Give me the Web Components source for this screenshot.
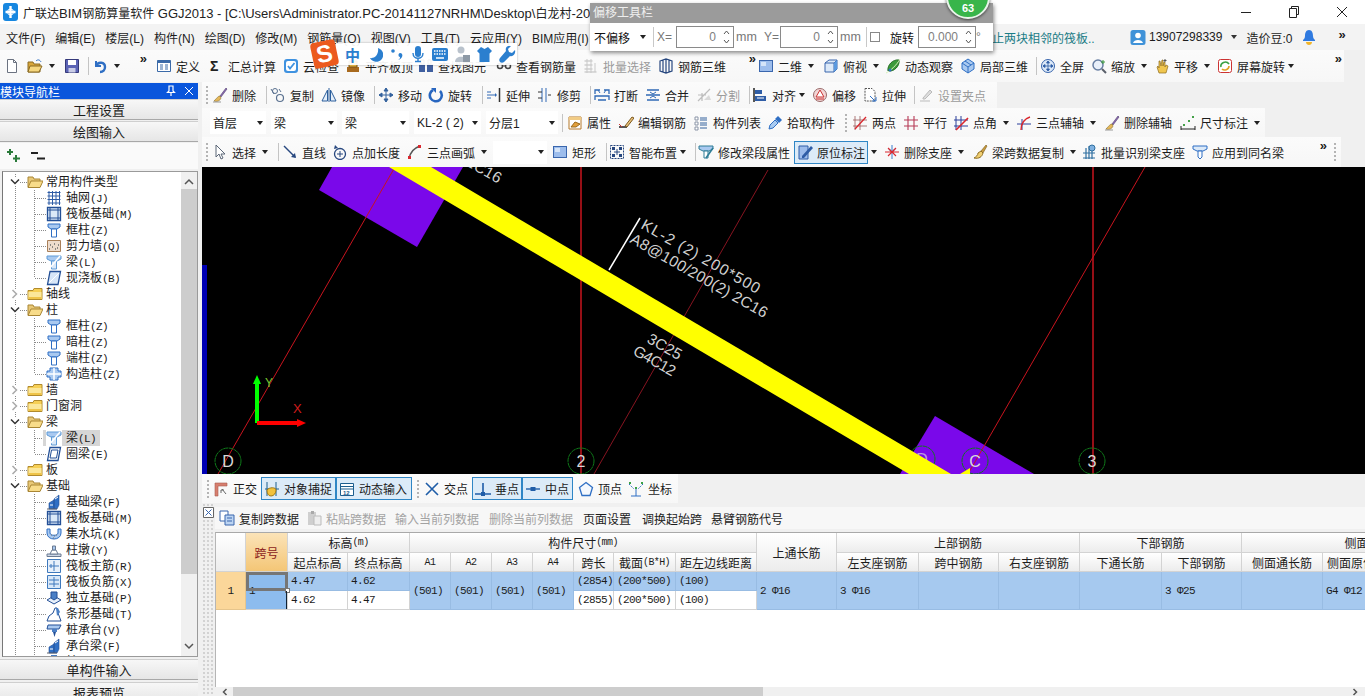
<!DOCTYPE html>
<html lang="zh-CN">
<head>
<meta charset="utf-8">
<title>GGJ2013</title>
<style>
  html, body { margin: 0; height: 100%; overflow: hidden; background: #f0f0f0; }
  body { position: relative; width: 1365px; height: 696px; font: 12px "Liberation Sans", "Noto Sans CJK SC", sans-serif; color: #1c1c1c; }
  #main { display: grid; grid-template-columns: 202px 1163px; height: 614px; }
  #right { display: grid; grid-template-rows: 26px 29px 30px 307px 29px 193px; min-width: 0; }
  .strip { display: flex; min-width: 0; overflow: hidden; }
</style>
</head>
<body>
<app-title><small>广联达</small>BIM<small>钢筋算量软件</small> GGJ2013 - [C:\Users\Administrator.PC-20141127NRHM\Desktop\<small>白龙村</small>-20</app-title>
<app-menu></app-menu>

<div class="strip" style="height:32px">
  <gl-bar style="padding-left:4px">
    <gl-tool w="23" icon="new"></gl-tool>
    <gl-tool w="37" icon="open" arrow></gl-tool>
    <gl-tool w="20" icon="save"></gl-tool>
    <gl-sep w="8"></gl-sep>
    <gl-tool w="30" icon="undo" arrow></gl-tool>
    <gl-more w="34" pr="9"></gl-more>
    <gl-tool w="52" icon="define">定义</gl-tool>
    <gl-tool w="75" icon="sum">汇总计算</gl-tool>
    <gl-tool w="62" icon="cloudcheck">云检查</gl-tool>
    <gl-tool w="73" icon="level">平齐板顶</gl-tool>
    <gl-tool w="78" icon="find">查找图元</gl-tool>
    <gl-tool w="87" icon="glasses">查看钢筋量</gl-tool>
    <gl-tool w="75" icon="batch" disabled>批量选择</gl-tool>
    <gl-tool w="82" icon="rebar3d">钢筋三维</gl-tool>
    <gl-more w="18"></gl-more>
  </gl-bar>
  <gl-bar>
    <gl-tool w="65" icon="rect" arrow>二维</gl-tool>
    <gl-tool w="62" icon="cube" arrow>俯视</gl-tool>
    <gl-tool w="75" icon="orbit">动态观察</gl-tool>
    <gl-tool w="72" icon="local3d">局部三维</gl-tool>
    <gl-sep w="8"></gl-sep>
    <gl-tool w="51" icon="fullscreen">全屏</gl-tool>
    <gl-tool w="63" icon="zoom" arrow>缩放</gl-tool>
    <gl-tool w="63" icon="hand" arrow>平移</gl-tool>
    <gl-tool w="113" icon="rotscreen" arrow small>屏幕旋转</gl-tool>
    <gl-more w="14"></gl-more>
  </gl-bar>
</div>

<div id="main">
  <nav-panel></nav-panel>
  <div id="right">
    <div class="strip">
      <gl-bar>
        <gl-grip w="10"></gl-grip>
        <gl-tool w="50" icon="brush">删除</gl-tool>
        <gl-sep w="8"></gl-sep>
        <gl-tool w="51" icon="copy">复制</gl-tool>
        <gl-tool w="49" icon="mirror">镜像</gl-tool>
        <gl-sep w="8"></gl-sep>
        <gl-tool w="50" icon="move">移动</gl-tool>
        <gl-tool w="50" icon="rotate">旋转</gl-tool>
        <gl-sep w="8"></gl-sep>
        <gl-tool w="51" icon="extend">延伸</gl-tool>
        <gl-tool w="49" icon="trim">修剪</gl-tool>
        <gl-sep w="8"></gl-sep>
        <gl-tool w="51" icon="break">打断</gl-tool>
        <gl-tool w="51" icon="merge">合并</gl-tool>
        <gl-tool w="51" icon="split" disabled>分割</gl-tool>
        <gl-sep w="5"></gl-sep>
        <gl-tool w="60" icon="align" arrow small>对齐</gl-tool>
        <gl-tool w="50" icon="offset">偏移</gl-tool>
        <gl-tool w="49" icon="stretch">拉伸</gl-tool>
        <gl-sep w="7"></gl-sep>
        <gl-tool w="79" icon="grippt" disabled>设置夹点</gl-tool>
      </gl-bar>
    </div>
    <div class="strip">
      <gl-bar style="padding-left:8px">
        <gl-combo w="56">首层</gl-combo>
        <gl-combo w="66" gap="5">梁</gl-combo>
        <gl-combo w="67" gap="5">梁</gl-combo>
        <gl-combo w="67" gap="5">KL-2 ( 2)</gl-combo>
        <gl-combo w="72" gap="5">分层1</gl-combo>
        <gl-sep w="9"></gl-sep>
        <gl-tool w="51" icon="props">属性</gl-tool>
        <gl-tool w="75" icon="editbar">编辑钢筋</gl-tool>
        <gl-tool w="74" icon="list">构件列表</gl-tool>
        <gl-tool w="73" icon="pick">拾取构件</gl-tool>
        <gl-grip w="12"></gl-grip>
        <gl-tool w="51" icon="twopt">两点</gl-tool>
        <gl-tool w="50" icon="parallel">平行</gl-tool>
        <gl-tool w="63" icon="ptangle" arrow>点角</gl-tool>
        <gl-tool w="88" icon="arc3axis" arrow>三点辅轴</gl-tool>
        <gl-tool w="76" icon="brush">删除辅轴</gl-tool>
        <gl-tool w="85" icon="dim" arrow>尺寸标注</gl-tool>
      </gl-bar>
    </div>
    <div class="strip">
      <gl-bar>
        <gl-grip w="10"></gl-grip>
        <gl-tool w="63" icon="cursor" arrow>选择</gl-tool>
        <gl-sep w="7"></gl-sep>
        <gl-tool w="50" icon="line">直线</gl-tool>
        <gl-tool w="75" icon="addlen">点加长度</gl-tool>
        <gl-tool w="86" icon="arc" arrow>三点画弧</gl-tool>
        <gl-combo w="54"></gl-combo>
        <gl-tool w="51" icon="rect" style="margin-left:5px">矩形</gl-tool>
        <gl-sep w="6"></gl-sep>
        <gl-tool w="83" icon="smart" arrow small>智能布置</gl-tool>
        <gl-sep w="6"></gl-sep>
        <gl-tool w="96" icon="beamprop">修改梁段属性</gl-tool>
        <gl-tool w="74" icon="inplace" active>原位标注</gl-tool>
        <gl-tool w="16" arrow small></gl-tool>
        <gl-tool w="88" icon="delsup" arrow>删除支座</gl-tool>
        <gl-tool w="109" icon="broom" arrow>梁跨数据复制</gl-tool>
        <gl-tool w="111" icon="batchsup">批量识别梁支座</gl-tool>
        <gl-tool w="125" icon="applysame">应用到同名梁</gl-tool>
        <gl-more w="12"></gl-more>
        <gl-grip w="12"></gl-grip>
      </gl-bar>
    </div>
    <cad-view></cad-view>
    <div class="strip">
      <gl-bar>
        <gl-grip w="11"></gl-grip>
        <gl-tool w="48" icon="ortho">正交</gl-tool>
        <gl-tool w="75" icon="snap" active>对象捕捉</gl-tool>
        <gl-tool w="76" icon="dyninput" active>动态输入</gl-tool>
        <gl-grip w="12"></gl-grip>
        <gl-tool w="48" icon="cross">交点</gl-tool>
        <gl-tool w="50" icon="perp" active>垂点</gl-tool>
        <gl-tool w="51" icon="mid" active>中点</gl-tool>
        <gl-tool w="55" icon="vertex" style="padding-left:5px">顶点</gl-tool>
        <gl-tool w="50" icon="coord">坐标</gl-tool>
      </gl-bar>
    </div>
    <span-panel></span-panel>
  </div>
</div>

<ime-bar></ime-bar>
<offset-float></offset-float>

<script>
const B = '#2f6fc4', L = '#a9c9f0', R = '#d9272e', Y = '#f0c24a', G = '#5a5f6a';
const column = `<path d="M2 2h12v3l-3 2H5L2 5z" fill="${L}" stroke="${B}"/><path d="M5.500 7h5v8h-5z" fill="#fff" stroke="${B}"/>`;
const footing = `<path d="M3 15V9l5-3v9zM8 15V5l5-4v10l-2 4z" fill="${B}" stroke="#234f96" stroke-width=".6"/><path d="M1 15h10" stroke="${G}"/><path d="M4 11h3M9 5l3-2" stroke="#fff"/>`;
const ICONS = {
  new: `<path d="M3.500 1.500h6l3 3v10h-9z" fill="#fff" stroke="#6b7280"/><path d="M9.500 1.500v3h3" fill="none" stroke="#6b7280"/>`,
  open: `<path d="M1 4h5l1 2h6v8H1z" fill="#d8a63a" stroke="#8a6a22"/><path d="M3 8h12l-3 6H1z" fill="#f5d67e" stroke="#8a6a22"/><path d="M9 3c2-2 4-1 5 1" fill="none" stroke="${B}"/>`,
  save: `<path d="M1.500 1.500h13v13h-13z" fill="#5b63b5" stroke="#35397a"/><path d="M4 2h8v5H4z" fill="#fff"/><path d="M4.500 10h7v4.500h-7z" fill="#c9cce6"/>`,
  undo: `<path d="M4 3v5h5" fill="none" stroke="${B}" stroke-width="2"/><path d="M4 8c2-5 9-4 9 1 0 3-2 5-5 5" fill="none" stroke="${B}" stroke-width="2.400"/>`,
  define: `<path d="M1.500 2.500h13v11h-13z" fill="#fff" stroke="#3b6aa8"/><path d="M1.500 2.500h13v2.500h-13z" fill="#3b6aa8"/><path d="M4 7h3M4 9h3M4 11h3M9 7h3M9 9h3M9 11h3" stroke="#3b6aa8"/>`,
  sum: `<text x="2" y="13" font-size="14" font-weight="700" font-family="Liberation Sans" fill="#222">Σ</text>`,
  cloudcheck: `<rect x="1" y="1" width="14" height="14" rx="3" fill="#3f92e0"/><rect x="3" y="3" width="10" height="10" rx="2" fill="#fff"/><path d="M5 8l2 2.500L11.500 5" fill="none" stroke="#3f92e0" stroke-width="1.800"/>`,
  level: `<path d="M2 9h12v5H2z" fill="#a86a1e"/><path d="M4 3h8v6H4z" fill="#f1c04a" stroke="#7a5314"/>`,
  find: `<path d="M1 6h6v8H1zM9 6h6v8H9z" fill="#3f5fa0"/><path d="M3 2h3v4H3zM10 2h3v4h-3z" fill="#e8e8e8" stroke="#444"/>`,
  glasses: `<circle cx="4" cy="8" r="2.500" fill="none" stroke="#444" stroke-width="1.500"/><circle cx="12" cy="8" r="2.500" fill="none" stroke="#444" stroke-width="1.500"/><path d="M6.500 8h3" stroke="#444"/>`,
  batch: `<path d="M1.500 3h8M1.500 7h8M1.500 11h8M1.500 14h12" stroke="#bbb"/><path d="M4 1v14M8 1v14M12 5v9" stroke="#c9c9c9"/>`,
  rebar3d: `<path d="M2 3l6-2 6 2v10l-6 2-6-2zM8 1v14M5 2v12M11 2v12" fill="none" stroke="#27477f" stroke-width="1.200"/>`,
  rect: `<rect x="1.500" y="2.500" width="13" height="11" fill="#9dbdec" stroke="#3a66ad"/><rect x="3" y="4" width="5" height="4" fill="#d5e4f8"/>`,
  cube: `<path d="M2 5l4-3h8v9l-3 3H2z" fill="#dce9f8" stroke="#3a66ad"/><path d="M2 5h9v9M11 5l3-3" fill="none" stroke="#3a66ad"/><path d="M11 5l3-3v9l-3 3z" fill="#5b9adf"/>`,
  orbit: `<path d="M3 13C2 7 8 1 14 2c1 6-5 12-11 11z" fill="#3c9a3a" stroke="#1e6b1e"/><path d="M1 15c3-1 11-8 14-14" stroke="#d7efb8" fill="none"/><circle cx="5" cy="12" r="1.500" fill="#2f6fc4"/>`,
  local3d: `<path d="M8 1l6 4v6l-6 4-6-4V5z" fill="${L}" stroke="${B}"/><path d="M2 5l6 4 6-4M8 9v6M5 3l6 4" fill="none" stroke="${B}"/>`,
  fullscreen: `<circle cx="8" cy="8" r="6.500" fill="#dce9f8" stroke="#3a66ad"/><path d="M8 3v10M3 8h10M8 3L6.500 5h3zM8 13l-1.500-2h3zM3 8l2-1.500v3zM13 8l-2-1.500v3z" stroke="#2f5da6" fill="#2f5da6" stroke-width=".8"/>`,
  zoom: `<circle cx="7" cy="7" r="5" fill="#e9f0fa" stroke="#687fa3" stroke-width="1.500"/><path d="M11 11l4 4" stroke="#5a5f6a" stroke-width="2"/><path d="M12 2v4M10 4h4" stroke="#3d9a3d"/>`,
  hand: `<path d="M3 9l2 6h7l2-7-2-1-1 2V4l-1 0-1 4V2H8L7 8 6 3H5v7L4 8z" fill="#f0c64f" stroke="#8e6c1c" stroke-width=".7"/><path d="M11 1v3M9.500 2.500h3" stroke="#555"/>`,
  rotscreen: `<rect x="1.500" y="1.500" width="13" height="13" rx="2" fill="#fff" stroke="#c33"/><path d="M4 9c-1-4 5-7 8-3" fill="none" stroke="#39a144" stroke-width="1.600"/><path d="M12 8c0 4-5 5-7 3" fill="none" stroke="#e0a022" stroke-width="1.600"/>`,
  brush: `<path d="M8 9l6-8 1 1-6 8z" fill="#8d6cb4" stroke="#4e3b6c" stroke-width=".6"/><path d="M8 9c-2 0-3 2-6 5 3 1 6 0 7-3z" fill="#e5b75a" stroke="#88702e" stroke-width=".6"/><path d="M1 15h8" stroke="#999"/>`,
  copy: `<circle cx="5" cy="4" r="2.500" fill="none" stroke="#59708f"/><circle cx="10" cy="11" r="3.500" fill="none" stroke="#59708f" stroke-width="1.200"/><path d="M1 2l3 5M9 2l2 3" stroke="#59708f"/>`,
  mirror: `<path d="M8 1v14" stroke="#2c5f9c"/><path d="M6.500 3v11H1zM9.500 3v11H15z" fill="#e4eef9" stroke="#2c5f9c"/>`,
  move: `<path d="M8 1v14M1 8h14M8 1L6 4h4zM8 15l-2-3h4zM1 8l3-2v4zM15 8l-3-2v4z" stroke="#35639e" fill="#35639e"/>`,
  rotate: `<path d="M12 4a6 6 0 1 1-7-1" fill="none" stroke="#2866c0" stroke-width="2.600"/><path d="M3 1h5v5z" fill="#2866c0"/>`,
  extend: `<path d="M1 8h8M1 5h4M1 11h4" stroke="#3069b5"/><path d="M9 6v4l2-2z" fill="#3069b5"/><path d="M13.500 1v14" stroke="#333" stroke-width="1.500"/>`,
  trim: `<path d="M5 1v14M9 1v14" stroke="#3069b5"/><path d="M1 5h4M1 11h4M11 8h3" stroke="#333"/>`,
  break: `<path d="M1 7V3h5M15 7V3h-5M1 13V9h14v4M4 13h8" fill="none" stroke="#3069b5" stroke-width="1.300"/><path d="M6 6l-2-3M10 6l2-3" stroke="#3069b5"/>`,
  merge: `<path d="M2 3h12M2 13h12M1 8h14" stroke="#3069b5" stroke-width="1.300"/><path d="M5 5l3 2 3-2M5 11l3-2 3 2" fill="none" stroke="#3069b5"/>`,
  split: `<path d="M2 14L14 2M2 8h8M6 14V6" stroke="#bdbdbd" stroke-width="1.200"/><path d="M8 13l5-5 2 5z" fill="#d9d9d9"/>`,
  align: `<path d="M2 1v14" stroke="#222" stroke-width="1.500"/><path d="M3 3h7v4H3z" fill="#2f5da6"/><path d="M3 9h11v5H3z" fill="#2f5da6"/><path d="M5 11h7" stroke="#fff"/>`,
  offset: `<circle cx="8" cy="8" r="6.500" fill="#f3d5d5" stroke="#9a6b6b"/><path d="M8 3l4 7H4z" fill="#fff" stroke="#c33"/><path d="M4 12h8" stroke="#c33"/>`,
  stretch: `<path d="M3 1.500h7l3 3V14H3z" fill="#fff" stroke="#555" stroke-dasharray="2 1"/><path d="M8 9l5 5" stroke="#2f6fc4"/><path d="M10 14h4v-4" fill="none" stroke="#2f6fc4"/>`,
  grippt: `<path d="M2 14h10" stroke="#bbb"/><path d="M5 11l7-8 2 2-7 7H5z" fill="#ddd" stroke="#bbb"/>`,
  props: `<path d="M2 2h12v12H2z" fill="#fff" stroke="#b5792a"/><path d="M2 2h12v3H2z" fill="#f1cb84"/><path d="M4 12l4-5 5 2-4 3z" fill="#e3a03c" stroke="#9a6a1d"/>`,
  editbar: `<path d="M1 12h8" stroke="#222" stroke-width="1.500"/><path d="M7 11l7-9 2 1-7 9z" fill="#e9c27a" stroke="#7c5920"/><path d="M1 9l3 3" stroke="#c33"/>`,
  list: `<path d="M2 2h3v3H2zM2 7h3v3H2zM2 12h3v3H2z" fill="#fff" stroke="#8a94a6"/><path d="M7 3h7M7 5h7M7 8h7M7 10h7M7 13h7" stroke="#35639e"/>`,
  pick: `<path d="M2 14l1-4 5-5 3 3-5 5z" fill="#a9cbf1" stroke="#2f6fc4"/><path d="M8 4l3-3 4 4-3 3z" fill="#2f6fc4"/>`,
  twopt: `<path d="M3 1v14M8 1v14M1 5h14M1 11h14" stroke="#9a5a5a" stroke-width=".8"/><path d="M3 14L14 2" stroke="${R}" stroke-width="1.300"/>`,
  parallel: `<path d="M5 1v14M11 1v14M1 5h14M1 11h14" stroke="#b63a56" stroke-width="1.100"/>`,
  ptangle: `<path d="M3 1v14M8 1v14M1 5h14M1 11h14" stroke="#2a3f9a" stroke-width="1"/><path d="M3 15L15 3" stroke="${R}" stroke-width="1.600"/>`,
  arc3axis: `<path d="M1 9h14M6 4v11" stroke="#2a3f9a"/><path d="M5 15c0-7 3-11 9-13" fill="none" stroke="${R}" stroke-width="1.400"/>`,
  dim: `<path d="M1 14h14M1 11v4M15 11v4" stroke="#222"/><path d="M3 9h2v2H3zM8 5h2v2H8zM12 1h2v2h-2z" fill="#43a047"/>`,
  cursor: `<path d="M4 1v12l3-3 2 5 2-1-2-4h4z" fill="#fff" stroke="#5b6677"/>`,
  line: `<path d="M2 2l11 11" stroke="#27477f" stroke-width="1.400"/><path d="M14 14l-5-1 4-4z" fill="#27477f"/>`,
  addlen: `<circle cx="8" cy="10" r="5.500" fill="none" stroke="#27477f" stroke-width="1.300"/><path d="M8 7v6M5 10h6" stroke="#27477f"/><path d="M3 1l3 3-4 1z" fill="#27477f"/>`,
  arc: `<path d="M2 15C3 8 7 4 13 2" fill="none" stroke="#555" stroke-width="1.500"/><path d="M1 12h3v3H1zM11 1h3v3h-3z" fill="${R}"/>`,
  smart: `<path d="M1.500 1.500h13v13h-13z" fill="none" stroke="#27477f" stroke-dasharray="2 1"/><path d="M3 3h3v3H3zM10 3h3v3h-3zM3 10h3v3H3zM10 10h3v3h-3z" fill="#27477f"/><path d="M8 5v6M5 8h6" stroke="#27477f"/>`,
  beamprop: `<path d="M1 2h14v3l-4 2H5L1 5z" fill="${L}" stroke="#2e7d96"/><path d="M6 7h4v7H6z" fill="#fff" stroke="#2e7d96"/><path d="M8 14L15 4" stroke="#2e7d96" stroke-width="1.600"/>`,
  inplace: `<path d="M2 2h9v13H2z" fill="#9dbdec" stroke="#2f5da6"/><path d="M5 12l9-10 2 2-9 10H5z" fill="#2f5da6"/>`,
  delsup: `<path d="M8 1v14M5 5l3 3 3-3" stroke="#7ba7dc" fill="none" stroke-width="1.500"/><path d="M1 8h14M4 4l8 8M12 4l-8 8" stroke="${R}" stroke-width="1.100"/>`,
  broom: `<path d="M9 7l5-6 1 1-4 7z" fill="#c89b3f" stroke="#7a5a1b" stroke-width=".6"/><path d="M9 7l2 2c-1 4-4 6-9 5 2-1 4-3 4-5z" fill="#f1cf71" stroke="#8c6d22"/>`,
  batchsup: `<path d="M2 9h12M2 14h12M8 2v13M5 4v11M11 4v11" stroke="#2f6fa0" stroke-width="1.200"/><circle cx="11" cy="4" r="3" fill="#7fb1e0" stroke="#2f6fa0"/>`,
  applysame: `<path d="M1 2h14v3l-4 2H5L1 5z" fill="#dbe9f8" stroke="${B}"/><path d="M6 7h4v6l-2 2-2-2z" fill="#fff" stroke="${B}"/>`,
  ortho: `<path d="M2 2h12v3H5v10H2z" fill="#d77f6f" stroke="#a85a4d" stroke-width=".6"/><path d="M9 8l4 5M11 9h-3v3" fill="none" stroke="#666"/>`,
  snap: `<path d="M3 1v14M12 1v14M1 8h14" stroke="#1d5e8e"/><path d="M3 9c2-3 9-3 9 0 0 3-2 6-5 6s-4-3-4-6z" fill="#f2c23d" stroke="#a07a17"/>`,
  dyninput: `<path d="M1.500 2.500h13v12h-13z" fill="#fff" stroke="#1d5e8e"/><path d="M1.500 5.500h13M1.500 8h13" stroke="#1d5e8e"/><text x="4" y="14" font-size="6" font-weight="700" font-family="Liberation Sans" fill="#1d5e8e">12</text>`,
  cross: `<path d="M2 2l12 12M14 2L2 14" stroke="#1f5da8" stroke-width="1.600"/>`,
  perp: `<path d="M8 2v11M0 13h16" stroke="#1f5da8" stroke-width="1.600"/><path d="M6 11h4v4H6z" fill="#1f5da8"/>`,
  mid: `<path d="M1 8h14" stroke="#1f5da8" stroke-width="1.400"/><path d="M5.500 6h5v4h-5z" fill="#1f5da8"/>`,
  vertex: `<path d="M8 1.500l6.500 5-2.500 8H4l-2.500-8z" fill="#f4f8fd" stroke="#2f6fc4" stroke-width="1.300"/>`,
  coord: `<path d="M8 6v9M3 15h10" stroke="#2f6fc4"/><path d="M1 3l5 5M15 3l-5 5" stroke="#2f6fc4" stroke-dasharray="1.500 1"/><path d="M7 6h2v2H7zM1 1h2v2H1zM13 1h2v2h-2z" fill="#39a144"/>`,
  paste: `<path d="M2 2h8v13H2z" fill="#cfcfcf"/><path d="M5 1h3v3H5z" fill="#aaa"/><path d="M8 6h7v9H8z" fill="#eee" stroke="#bbb"/>`,
  copyrow: `<path d="M1 1h8v10H1z" fill="#fff" stroke="#3a66ad"/><path d="M6 5h9v10H6z" fill="#bcd4f2" stroke="#3a66ad"/><path d="M8 8h5M8 11h5" stroke="#3a66ad"/>`,
  folder: `<path d="M1 4.500h5l1-2h8v11H1z" fill="#f6cf55" stroke="#b18a2d"/><path d="M1.500 6h13v7h-13z" fill="#fbe79a"/><path d="M1.500 11h13v2h-13z" fill="#efc449"/>`,
  folderopen: `<path d="M1 13V3h5l1 2h6v3" fill="#e8c877" stroke="#a98634"/><path d="M4 7h12l-3 6.500H1z" fill="#f8dc8a" stroke="#a98634"/>`,
  axisgrid: `<path d="M1.500 2.500h13M1.500 6h13M1.500 9.500h13M1.500 13h13M3 1v14M6.500 1v14M10 1v14M13.500 1v14" stroke="#2f5da6"/>`,
  raft: `<path d="M1.500 1.500h13v13h-13z" fill="#dbe9f8" stroke="#234f96" stroke-width="1.300"/><path d="M4 1.500v13M12 1.500v13M1.500 4h13M1.500 12h13" stroke="#234f96"/>`,
  column,
  wall: `<path d="M1.500 2.500h13v11h-13z" fill="#eedccd" stroke="#a9805a"/><path d="M3 11h1M6 9h1M9 11h1M12 7h1M4 7h1M8 6h1M11 10h1" stroke="#6a6a6a" stroke-width="1.400"/>`,
  beam: `<path d="M1 2h14v3l-4 2H5L1 5z" fill="${L}" stroke="#5f9bd7"/><path d="M5.500 7h5v8h-5z" fill="#d9e8f8" stroke="#5f9bd7"/><path d="M3 15L14 2" stroke="#fff" stroke-width="1.500"/>`,
  slab: `<path d="M4 1.500h10.500l-2.500 13H1.500z" fill="#d7e6f8" stroke="#234f96" stroke-width="1.300"/><path d="M3 13L13 3" stroke="#fff"/>`,
  ring: `<path d="M4 1.500h10.500l-2.500 13H1.500z" fill="#fff" stroke="#234f96" stroke-width="1.300"/><path d="M5.500 4h6.500l-1.500 8H4z" fill="none" stroke="#234f96"/>`,
  gz: `<path d="M4 2h8v3h3v6h-3v3H4v-3H1V5h3z" fill="${L}" stroke="${B}"/><path d="M8 2v12M1 8h14" stroke="#fff" stroke-width="1.500"/>`,
  footing,
  pit: `<path d="M1 3h3v4c0 3 8 3 8 0V3h3v4c0 8-14 8-14 0z" fill="${L}" stroke="${B}"/><path d="M5 9h1M8 10h1M10 9h1M7 12h1" stroke="#777"/>`,
  pier: `<path d="M1 12h14v2.500H1z" fill="#cfd8e6" stroke="#6a7a92"/><path d="M4 12l2-4h4l2 4z" fill="#fff" stroke="#6a7a92"/><path d="M6.500 4h3v4h-3z" fill="${L}" stroke="#6a7a92"/>`,
  raftmain: `<path d="M1.500 1.500h13v13h-13z" fill="#e7f0fb" stroke="#3e79bd"/><path d="M8 3v10M3 8h10M5 6v4" stroke="#3e79bd"/>`,
  raftneg: `<path d="M1.500 1.500h13v13h-13z" fill="#d9e8f8" stroke="#3e79bd"/><path d="M8 3v10M3 6h10M3 10h10" stroke="#3e79bd"/>`,
  isolated: `<path d="M1 10l7-4 7 4-7 4z" fill="#e7f0fb" stroke="#234f96"/><path d="M5 2h6v6l-3 2-3-2z" fill="#4a7fc5" stroke="#234f96"/>`,
  strip: `<path d="M1 15l2-5 4-3 2-5h2l1 5 3 8z" fill="#fff" stroke="#234f96"/><path d="M10 2h2l2 4-3 4z" fill="#4a7fc5"/>`,
  cap: `<path d="M2 3h13l-2 4H1z" fill="${L}" stroke="#234f96"/><path d="M6 7h5v3H6z" fill="#4a7fc5"/><path d="M7 10h3l-1.500 5z" fill="#234f96"/>`,
  pile: `<path d="M5 1h6v4H5z" fill="#4a7fc5"/><path d="M6 5h4v7l-2 3-2-3z" fill="#234f96"/>`,
  userface: `<rect x="0.500" y="1" width="15" height="15" rx="2.500" fill="#3f92d8"/><circle cx="8" cy="6.500" r="2.800" fill="#fff"/><path d="M3 14c1-4 9-4 10 0z" fill="#fff"/>`,
  bell: `<path d="M8 1c3 0 4 3 4 6 0 2 1 3 2 4v1H2v-1c1-1 2-2 2-4 0-3 1-6 4-6z" fill="#2f7ae0"/><path d="M5 13h6c0 2-1.500 3-3 3s-3-1-3-3z" fill="#f0b429"/>`
};

class AppIcon extends HTMLElement {
  connectedCallback() {
    if (this.shadowRoot) return;
    this.attachShadow({ mode: 'open' });
    const s = this.getAttribute('s') || 16;
    this.shadowRoot.innerHTML = `<style>:host{display:inline-flex;flex:none;width:${s}px;height:${s}px}svg{display:block}</style>
      <svg width="${s}" height="${s}" viewBox="0 0 16 16">${ICONS[this.getAttribute('name')] || ''}</svg>`;
  }
}
customElements.define('app-icon', AppIcon);

class AppTitle extends HTMLElement {
  constructor() {
    super();
    this.attachShadow({ mode: 'open' });
    this.shadowRoot.innerHTML = `<style>
      :host{display:flex;align-items:center;height:24px;background:#fff;white-space:nowrap;overflow:hidden}
      .logo{margin:0 5px 0 3px;flex:none}
      .t{font-size:13px;flex:none;width:960px;overflow:hidden;color:#222}
      ::slotted(small){font-size:12px}
      .win{margin-left:auto;display:flex;align-items:center;flex:none}
      .win svg{display:block;margin-right:36px}
      .win svg:last-child{margin-right:17px}
    </style>
    <svg class="logo" width="15" height="18" viewBox="0 0 15 18"><rect width="15" height="18" rx="3" fill="#1787e0"/><path d="M7.500 3v12M2.500 9h10" stroke="#fff" stroke-width="2.400"/><circle cx="7.500" cy="9" r="3" fill="none" stroke="#fff"/></svg>
    <span class="t"><slot></slot></span>
    <span class="win">
      <svg width="12" height="12" viewBox="0 0 12 12"><path d="M1 6.500h10" stroke="#222"/></svg>
      <svg width="12" height="12" viewBox="0 0 12 12"><path d="M3.500 2.500V.5h7v8h-2M1.500 2.500h7v9h-7z" fill="none" stroke="#222"/></svg>
      <svg width="12" height="12" viewBox="0 0 12 12"><path d="M1 1l10 10M11 1L1 11" stroke="#222"/></svg>
    </span>`;
  }
}
customElements.define('app-title', AppTitle);

class AppMenu extends HTMLElement {
  constructor() {
    super();
    this.attachShadow({ mode: 'open' });
    const menus = ['文件(F)', '编辑(E)', '楼层(L)', '构件(N)', '绘图(D)', '修改(M)', '钢筋量(Q)', '视图(V)', '工具(T)', '云应用(Y)', 'BIM应用(I)'];
    this.shadowRoot.innerHTML = `<style>
      :host{display:flex;align-items:center;height:26px;background:#f3f3f3;white-space:nowrap}
      .left{display:flex;gap:10px;padding-left:6px;width:986px;box-sizing:content-box;overflow:hidden;flex:none}
      .notice{color:#1b7c86;width:138px;flex:none;overflow:hidden}
      .user{display:flex;align-items:center;flex:none}
      .num{margin-left:3px}
      .arrow{width:0;height:0;border:3px solid transparent;border-top:4px solid #333;border-bottom:0;margin:0 9px}
      .more{margin-left:21px;font-weight:700;font-size:13px;position:relative;top:-3px}
    </style>
    <div class="left">${menus.map(m => `<span>${m}</span>`).join('')}</div>
    <span class="notice">止两块相邻的筏板..</span>
    <span class="user"><app-icon name="userface"></app-icon><span class="num">13907298339</span><i class="arrow"></i><span>造价豆:0</span>
    <app-icon name="bell" style="margin-left:9px"></app-icon><span class="more">»</span></span>`;
  }
}
customElements.define('app-menu', AppMenu);

class GlBar extends HTMLElement {
  constructor() {
    super();
    this.attachShadow({ mode: 'open' });
    this.shadowRoot.innerHTML = `<style>:host{display:flex;flex:none;align-items:stretch;height:100%;background:linear-gradient(#fbfbfb,#f7f7f7);white-space:nowrap}</style><slot></slot>`;
  }
}
customElements.define('gl-bar', GlBar);

class GlTool extends HTMLElement {
  connectedCallback() {
    if (this.shadowRoot) return;
    this.attachShadow({ mode: 'open' });
    const icon = this.getAttribute('icon');
    const hasArrow = this.hasAttribute('arrow');
    const small = this.hasAttribute('small');
    this.style.width = this.getAttribute('w') + 'px';
    this.shadowRoot.innerHTML = `<style>
      :host{display:inline-flex;align-items:center;flex:none;box-sizing:border-box;font-size:12px;color:#1c1c1c}
      :host([disabled]){color:#9b9b9b}
      :host([active]){height:23px;align-self:center;border:1px solid #2f86c5;background:#dcebf8;padding-left:2px}
      .l{margin-left:4px}
      .l:empty{display:none}
      .arrow{width:0;height:0;border:3px solid transparent;border-top:4px solid #222;border-bottom:0;margin-left:${small ? 3 : 6}px}
    </style>
    ${icon ? `<app-icon name="${icon}"></app-icon>` : ''}
    <span class="l">${this.textContent.trim()}</span>
    ${hasArrow ? '<i class="arrow"></i>' : ''}`;
  }
}
customElements.define('gl-tool', GlTool);

class GlSep extends HTMLElement {
  connectedCallback() {
    if (this.shadowRoot) return;
    this.attachShadow({ mode: 'open' });
    this.shadowRoot.innerHTML = `<style>:host{display:flex;justify-content:center;align-items:center;flex:none;width:${this.getAttribute('w')}px}i{width:1px;height:18px;background:#c4c4c4}</style><i></i>`;
  }
}
customElements.define('gl-sep', GlSep);

class GlGrip extends HTMLElement {
  connectedCallback() {
    if (this.shadowRoot) return;
    this.attachShadow({ mode: 'open' });
    this.shadowRoot.innerHTML = `<style>:host{display:flex;justify-content:center;align-items:center;flex:none;width:${this.getAttribute('w')}px}
      i{width:2px;height:18px;background:repeating-linear-gradient(#b4b4b4 0 2px,transparent 2px 4px)}</style><i></i>`;
  }
}
customElements.define('gl-grip', GlGrip);

class GlMore extends HTMLElement {
  connectedCallback() {
    if (this.shadowRoot) return;
    this.attachShadow({ mode: 'open' });
    this.shadowRoot.innerHTML = `<style>:host{display:block;flex:none;width:${this.getAttribute('w')}px;font:700 13px "Liberation Sans",sans-serif;line-height:18px;text-align:right;box-sizing:border-box;padding-right:${this.getAttribute('pr') || 2}px}</style>»`;
  }
}
customElements.define('gl-more', GlMore);

class GlCombo extends HTMLElement {
  connectedCallback() {
    if (this.shadowRoot) return;
    this.attachShadow({ mode: 'open' });
    this.style.width = this.getAttribute('w') + 'px';
    this.style.marginLeft = (this.getAttribute('gap') || 0) + 'px';
    this.shadowRoot.innerHTML = `<style>
      :host{display:inline-flex;align-items:center;flex:none;box-sizing:border-box;background:#fff;padding:0 3px;height:23px;align-self:center}
      span{flex:1;overflow:hidden}
      i{width:0;height:0;border:3px solid transparent;border-top:4px solid #222;border-bottom:0}
    </style><span><slot></slot></span><i></i>`;
  }
}
customElements.define('gl-combo', GlCombo);

class TreeRow extends HTMLElement {
  connectedCallback() {
    if (this.shadowRoot) return;
    this.attachShadow({ mode: 'open' });
    const code = this.getAttribute('code') || '';
    const open = this.hasAttribute('open');
    const child = this.hasAttribute('child');
    const icon = child ? this.getAttribute('icon') : (open ? 'folderopen' : 'folder');
    const dots = 'repeating-linear-gradient(#8a8a8a 0 1px,transparent 1px 2px)';
    const dotsH = 'repeating-linear-gradient(90deg,#8a8a8a 0 1px,transparent 1px 2px)';
    const chevron = open
      ? '<svg class="ex" width="10" height="8" viewBox="0 0 10 8" style="left:10px"><path d="M1 1.500l4 4 4-4" fill="none" stroke="#333" stroke-width="1.500"/></svg>'
      : '<svg class="ex" width="8" height="10" viewBox="0 0 8 10" style="left:11px"><path d="M1.500 1l4 4-4 4" fill="none" stroke="#aaa" stroke-width="1.500"/></svg>';
    this.shadowRoot.innerHTML = `<style>
      :host{display:flex;align-items:center;height:16px;position:relative;flex:none;white-space:nowrap}
      .v0{position:absolute;left:15px;top:0;bottom:0;width:1px;background:${dots}}
      .v1{position:absolute;left:34px;top:0;height:${this.hasAttribute('last') ? 8 : 16}px;width:1px;background:${dots}}
      .h{position:absolute;height:1px;top:8px;background:${dotsH}}
      .ex{position:absolute;top:50%;transform:translateY(-50%);background:#fff}
      .ic{position:absolute;left:${child ? 46 : 27}px;top:0;background:#fff}
      .lb{position:absolute;left:${child ? 66 : 46}px;top:0;height:16px;line-height:16px;padding-right:3px}
      :host([selected]) .sel{position:absolute;left:43px;top:0;width:57px;height:16px;background:#d6d6d6}
      b{font:400 11px "Liberation Mono",monospace;letter-spacing:-.6px}
    </style>
    <i class="v0"></i>
    ${child ? `<i class="v1"></i><i class="h" style="left:35px;width:11px"></i>` : `<i class="h" style="left:20px;width:7px"></i>${chevron}`}
    <span class="sel"></span>
    <app-icon class="ic" name="${icon}"></app-icon>
    <span class="lb">${this.getAttribute('label')}<b>${code}</b></span>`;
  }
}
customElements.define('tree-row', TreeRow);

class NavButton extends HTMLElement {
  constructor() {
    super();
    this.attachShadow({ mode: 'open' });
    this.shadowRoot.innerHTML = `<style>:host{display:flex;align-items:center;justify-content:center;flex:none;height:21px;margin-bottom:1px;width:198px;background:linear-gradient(#f7f7f7,#e6e6e6);border-bottom:1px solid #a8a8a8;border-top:1px solid #cfcfcf;box-sizing:border-box;font-size:13px}</style><slot></slot>`;
  }
}
customElements.define('nav-button', NavButton);

class NavPanel extends HTMLElement {
  constructor() {
    super();
    this.attachShadow({ mode: 'open' });
    const k = (label, code, icon, extra = '') => `<tree-row child label="${label}" code="${code}" icon="${icon}" ${extra}></tree-row>`;
    const f = (label, extra = '') => `<tree-row label="${label}" ${extra}></tree-row>`;
    this.shadowRoot.innerHTML = `<style>
      :host{display:flex;flex-direction:column;width:202px;height:614px;overflow:hidden;box-sizing:border-box;font-size:12px}
      .head{display:flex;align-items:center;flex:none;height:16px;margin-top:1px;width:198px;background:#0a56dc;color:#fff;white-space:nowrap}
      .head span{flex:1}
      .head svg{flex:none;margin-right:8px}
      .mini{display:flex;align-items:center;gap:8px;height:26px;flex:none;padding-left:6px;width:192px;background:#fafafa}
      .tree{position:relative;flex:none;height:486px;width:196px;margin:2px 0 2px 2px;border:1px solid #9a9a9a;border-left-color:#777;background:#fff;box-sizing:border-box;overflow:hidden}
      .rows{display:flex;flex-direction:column;margin-left:-3px;padding-top:2px}
      .sb{position:absolute;right:0;top:0;bottom:0;width:16px;background:#f0f0f0}
      .thumb{position:absolute;top:17px;left:0;right:0;height:385px;background:#cdcdcd}
      .sb svg{position:absolute;left:3px}
    </style>
    <div class="head"><span>模块导航栏</span>
      <svg width="10" height="12" viewBox="0 0 10 12"><path d="M3 1h4v5l1.500 1.500h-7L3 6zM5 7.500V11" fill="none" stroke="#fff" stroke-width="1.200"/></svg>
      <svg width="10" height="10" viewBox="0 0 10 10" style="margin-right:4px"><path d="M1 1l8 8M9 1L1 9" stroke="#fff"/></svg>
    </div>
    <nav-button>工程设置</nav-button>
    <nav-button>绘图输入</nav-button>
    <div class="mini">
      <svg width="16" height="16" viewBox="0 0 16 16"><path d="M4 1v6M1 4h6M10 7v7M7 10.500h7" stroke="#2a7a3a" stroke-width="2"/></svg>
      <svg width="16" height="16" viewBox="0 0 16 16"><path d="M1 5h7M7 10.500h8" stroke="#222" stroke-width="2"/></svg>
    </div>
    <div class="tree">
      <div class="rows">
        ${f('常用构件类型', 'open')}
        ${k('轴网', '(J)', 'axisgrid')}${k('筏板基础', '(M)', 'raft')}${k('框柱', '(Z)', 'column')}
        ${k('剪力墙', '(Q)', 'wall')}${k('梁', '(L)', 'beam')}${k('现浇板', '(B)', 'slab', 'last')}
        ${f('轴线')}
        ${f('柱', 'open')}
        ${k('框柱', '(Z)', 'column')}${k('暗柱', '(Z)', 'column')}${k('端柱', '(Z)', 'column')}${k('构造柱', '(Z)', 'gz', 'last')}
        ${f('墙')}${f('门窗洞')}
        ${f('梁', 'open')}
        ${k('梁', '(L)', 'beam', 'selected')}${k('圈梁', '(E)', 'ring', 'last')}
        ${f('板')}
        ${f('基础', 'open')}
        ${k('基础梁', '(F)', 'footing')}${k('筏板基础', '(M)', 'raft')}${k('集水坑', '(K)', 'pit')}${k('柱墩', '(Y)', 'pier')}
        ${k('筏板主筋', '(R)', 'raftmain')}${k('筏板负筋', '(X)', 'raftneg')}${k('独立基础', '(P)', 'isolated')}
        ${k('条形基础', '(T)', 'strip')}${k('桩承台', '(V)', 'cap')}${k('承台梁', '(F)', 'footing')}${k('桩', '(U)', 'pile')}
      </div>
      <div class="sb">
        <svg width="10" height="8" viewBox="0 0 10 8" style="top:6px"><path d="M1 6l4-4 4 4" fill="none" stroke="#555" stroke-width="1.500"/></svg>
        <div class="thumb"></div>
        <svg width="10" height="8" viewBox="0 0 10 8" style="bottom:6px"><path d="M1 2l4 4 4-4" fill="none" stroke="#555" stroke-width="1.500"/></svg>
      </div>
    </div>
    <nav-button style="margin-bottom:2px">单构件输入</nav-button>
    <nav-button>报表预览</nav-button>`;
  }
}
customElements.define('nav-panel', NavPanel);

class CadView extends HTMLElement {
  constructor() {
    super();
    this.attachShadow({ mode: 'open' });
    const bubble = (x, y, t, o = 1) => `<circle cx="${x}" cy="${y}" r="13" fill="none" stroke="#0f7a1a" stroke-dasharray="5 .6"/>
      <text x="${x}" y="${y + 6}" text-anchor="middle" font-size="16" fill="#d8d8d8" opacity="${o}">${t}</text>`;
    const label = (x, y, len, t) => `<text transform="translate(${x} ${y}) rotate(29.500)" font-size="15.500" textLength="${len}" lengthAdjust="spacing" fill="#d2d2d2">${t}</text>`;
    this.shadowRoot.innerHTML = `<style>
      :host{display:block;width:1163px;height:307px;background:#000;overflow:hidden}
      svg{display:block}
      text{font-family:"Liberation Sans",sans-serif}
    </style>
    <svg width="1163" height="307" viewBox="202 167 1163 307">
      <rect x="202" y="265" width="5" height="209" fill="#0000b4"/>
      <polygon points="332,167 463,167 417,247 319,190" fill="#7a08ea"/>
      <polygon points="935,416 1034,474 900,474" fill="#7a08ea"/>
      <line x1="395" y1="167" x2="218" y2="474" stroke="#c8141e"/>
      <line x1="768" y1="170" x2="594" y2="474" stroke="#861420"/>
      <line x1="1145" y1="167" x2="968" y2="474" stroke="#c8141e"/>
      <line x1="581" y1="167" x2="581" y2="474" stroke="#c8141e" stroke-width="1.500"/>
      <line x1="1093" y1="167" x2="1093" y2="474" stroke="#c8141e" stroke-width="1.500"/>
      ${bubble(228, 461, 'D')}${bubble(581, 461, '2')}${bubble(1092, 461, '3')}${bubble(922, 459, 'D', .7)}${bubble(975, 461, 'C')}
      <polygon points="389,167 431,167 951,474 909,474" fill="#ffff00"/>
      <polygon points="960,474 970,468 970,474" fill="#ffff00"/>
      <line x1="640" y1="218" x2="609" y2="270" stroke="#fff" stroke-width="1.500"/>
      ${label(640, 228, 134, 'KL-2 (2) 200*500')}
      ${label(629, 242, 155, 'A8@100/200(2) 2C16')}
      ${label(646, 342, 37, '3C25')}
      ${label(632, 354, 46, 'G4C12')}
      ${label(465, 165, 38, '2C16')}
      <path d="M257 423V382" stroke="#00ff00" stroke-width="4"/><path d="M257 375l-4 9h8z" fill="#00ff00"/>
      <path d="M257 423h42" stroke="#ff0000" stroke-width="4"/><path d="M306 423l-9-4v8z" fill="#ff0000"/>
      <text x="265" y="387" font-size="12" fill="#7cc832">Y</text>
      <text x="293" y="413" font-size="13" fill="#d11c1c">X</text>
    </svg>`;
  }
}
customElements.define('cad-view', CadView);

class SpanPanel extends HTMLElement {
  constructor() {
    super();
    this.attachShadow({ mode: 'open' });
    const m = t => `<span class="m">${t}</span>`;
    const h = (t, c, r, cls = '') => `<div class="c h ${cls}" style="grid-column:${c};grid-row:${r}">${t}</div>`;
    const d = (t, c, r, cls = 'b') => `<div class="c ${cls}" style="grid-column:${c};grid-row:${r}">${t}</div>`;
    this.shadowRoot.innerHTML = `<style>
      :host{display:grid;grid-template-columns:13px 1fr;width:1163px;height:193px;overflow:hidden;background:#f0f0f0}
      .gutter{background:radial-gradient(#c2c2c2 .6px,transparent .9px) 0 0/4px 4px;position:relative}
      .gutter svg{position:absolute;left:1px;top:4px;background:#f0f0f0}
      .body{display:flex;flex-direction:column;min-width:0}
      .tb{display:flex;align-items:center;height:22px;margin:4px 0 3px;background:#f7f7f7;white-space:nowrap;flex:none}
      .tb span{flex:none}
      .tb .off{color:#a3a3a3}
      .tb app-icon+span{margin-left:4px}
      .wrap{flex:1;min-height:0;background:#fff;border-top:1px solid #a9a9a9;border-left:1px solid #b5b5b5;overflow:hidden}
      .grid{display:grid;grid-template-columns:30px 42px 60px 62px 41px 41px 41px 41px 40px 62px 81px 80px 82px 80px 81px 82px 80px 81px 81px 92px;grid-template-rows:20px 19px 19px 19px;width:1270px}
      .c{display:flex;align-items:center;box-sizing:border-box;border-right:1px solid #d3d3d3;border-bottom:1px solid #d3d3d3;white-space:nowrap;overflow:hidden;padding-left:3px;position:relative}
      .h{justify-content:center;padding:0;background:linear-gradient(#fff,#ececec);font-size:12px}
      .h .m{font-size:10px}
      .b{background:#a6c9ef;border-right-color:#98bce3;border-bottom-color:#98bce3}
      .w{background:#fff}
      .span{background:linear-gradient(#fbe3b8,#f4c676);color:#8c1c1c}
      .no{background:#fbd79a;justify-content:center;border-color:#e6c58c;padding:0}
      .sel{background:#8dbcee;overflow:visible;z-index:1}
      .box{position:absolute;left:0;top:0;right:-1px;height:19px;border:3px solid #767676;box-sizing:border-box}
      .grab{position:absolute;right:-3px;top:16px;width:5px;height:5px;background:#fff;border:1px solid #777;box-sizing:border-box}
      .edge{position:absolute;right:0;top:19px;bottom:0;width:1px;background:#123}
      .m{font:11px "Liberation Mono",monospace;letter-spacing:-.6px}
      .sc{display:flex;flex:none;align-items:center;height:9px;background:#f0f0f0;position:relative;overflow:hidden}
      .sc i{display:block;margin-left:18px;width:530px;height:9px;background:#cdcdcd}
      .sc svg{position:absolute;top:1px}
    </style>
    <div class="gutter"><svg width="11" height="11" viewBox="0 0 11 11"><path d="M.5.5h10v10H.5z" fill="#fff" stroke="#666"/><path d="M2.500 2.500l6 6M8.500 2.500l-6 6" stroke="#3a66ad"/></svg></div>
    <div class="body">
      <div class="tb">
        <app-icon name="copyrow" style="margin-left:4px"></app-icon><span>复制跨数据</span>
        <app-icon name="paste" style="margin-left:7px"></app-icon><span class="off">粘贴跨数据</span>
        <span class="off" style="margin-left:9px">输入当前列数据</span>
        <span class="off" style="margin-left:10px">删除当前列数据</span>
        <span style="margin-left:10px">页面设置</span>
        <span style="margin-left:11px">调换起始跨</span>
        <span style="margin-left:9px">悬臂钢筋代号</span>
      </div>
      <div class="wrap"><div class="grid">
        <div class="c h" style="grid-column:1;grid-row:1/3"></div>
        <div class="c h span" style="grid-column:2;grid-row:1/3">跨号</div>
        ${h('标高' + m('(m)'), '3/5', 1)}
        ${h('构件尺寸' + m('(mm)'), '5/12', 1)}
        ${h('上通长筋', 12, '1/3')}
        ${h('上部钢筋', '13/16', 1)}
        ${h('下部钢筋', '16/18', 1)}
        ${h('侧面钢筋', '18/21', 1)}
        ${h('起点标高', 3, 2)}${h('终点标高', 4, 2)}
        ${h(m('A1'), 5, 2)}${h(m('A2'), 6, 2)}${h(m('A3'), 7, 2)}${h(m('A4'), 8, 2)}
        ${h('跨长', 9, 2)}${h('截面' + m('(B*H)'), 10, 2)}${h('距左边线距离', 11, 2)}
        ${h('左支座钢筋', 13, 2)}${h('跨中钢筋', 14, 2)}${h('右支座钢筋', 15, 2)}
        ${h('下通长筋', 16, 2)}${h('下部钢筋', 17, 2)}${h('侧面通长筋', 18, 2)}${h('侧面原位钢筋', 19, 2)}

        <div class="c no" style="grid-column:1;grid-row:3/5"><span class="m">1</span></div>
        <div class="c sel" style="grid-column:2;grid-row:3/5"><span class="m">1</span><i class="box"></i><i class="grab"></i><i class="edge"></i></div>
        ${d(m('4.47'), 3, 3)}${d(m('4.62'), 4, 3)}
        ${d(m('4.62'), 3, 4, 'w')}${d(m('4.47'), 4, 4, 'w')}
        ${[5, 6, 7, 8].map(c => d(m('(501)'), c, '3/5')).join('')}
        ${d(m('(2854)'), 9, 3)}${d(m('(200*500)'), 10, 3)}${d(m('(100)'), 11, 3)}
        ${d(m('(2855)'), 9, 4, 'w')}${d(m('(200*500)'), 10, 4, 'w')}${d(m('(100)'), 11, 4, 'w')}
        ${d(m('2 Φ16'), 12, '3/5')}
        ${d(m('3 Φ16'), 13, '3/5')}
        ${d('', 14, '3/5')}${d('', 15, '3/5')}${d('', 16, '3/5')}
        ${d(m('3 Φ25'), 17, '3/5')}
        ${d('', 18, '3/5')}
        ${d(m('G4 Φ12'), 19, '3/5')}
        ${d('', 20, '3/5')}
      </div></div>
      <div class="sc"><i></i>
        <svg width="8" height="8" viewBox="0 0 8 8" style="left:6px"><path d="M5.500 1l-3 3 3 3" fill="none" stroke="#555" stroke-width="1.500"/></svg>
        <svg width="8" height="8" viewBox="0 0 8 8" style="right:6px"><path d="M2.500 1l3 3-3 3" fill="none" stroke="#555" stroke-width="1.500"/></svg>
      </div>
    </div>`;
  }
}
customElements.define('span-panel', SpanPanel);

class SpinBox extends HTMLElement {
  connectedCallback() {
    if (this.shadowRoot) return;
    this.attachShadow({ mode: 'open' });
    this.shadowRoot.innerHTML = `<style>
      :host{display:flex;align-items:center;flex:none;width:58px;height:22px;box-sizing:border-box;border:1px solid #8a8a8a;background:#fff;color:#808080;font-size:12px}
      span{flex:1;text-align:right;padding-right:6px}
      svg{flex:none;margin-right:2px}
    </style><span>${this.getAttribute('value')}</span>
    <svg width="9" height="18" viewBox="0 0 9 18"><path d="M2 6l2.500-3L7 6M2 12l2.500 3L7 12" fill="none" stroke="#555"/></svg>`;
  }
}
customElements.define('spin-box', SpinBox);

class OffsetFloat extends HTMLElement {
  constructor() {
    super();
    this.attachShadow({ mode: 'open' });
    this.shadowRoot.innerHTML = `<style>
      :host{position:absolute;left:590px;top:3px;width:403px;height:48px;display:flex;flex-direction:column;background:#fff;box-shadow:1px 2px 4px rgba(0,0,0,.45);font-size:12px}
      .cap{flex:none;height:20px;background:#9b9b9b;color:#eee;display:flex;align-items:center;padding-left:3px;line-height:18px}
      .row{flex:1;display:flex;align-items:center;padding-left:4px;white-space:nowrap;color:#777}
      .combo{color:#111;width:46px;flex:none}
      .arrow{width:0;height:0;border:3px solid transparent;border-top:4px solid #222;border-bottom:0;flex:none}
      .sep{width:1px;height:20px;background:#c8c8c8;flex:none;margin:0 3px 0 7px}
      .eq{width:19px;flex:none}
      .mm{width:30px;flex:none;padding-left:2px;box-sizing:border-box;font-size:12.500px}
      .chk{width:10px;height:10px;border:1px solid #888;flex:none;box-sizing:border-box;margin:0 10px 0 0}
      .rot{color:#111;width:28px;flex:none}
      .badge{position:absolute;left:356px;top:-28px;width:44px;height:44px;border-radius:50%;background:#38b54a;border:2px solid #e9f4ea;box-shadow:0 1px 3px rgba(0,0,0,.6);box-sizing:border-box;display:flex;align-items:flex-end;justify-content:center;color:#fff;font:700 11px "Liberation Sans",sans-serif;padding-bottom:3px}
    </style>
    <div class="cap">偏移工具栏</div>
    <div class="row">
      <span class="combo">不偏移</span><i class="arrow"></i><i class="sep"></i>
      <span class="eq">X=</span><spin-box value="0"></spin-box><span class="mm">mm</span>
      <span class="eq" style="width:16px">Y=</span><spin-box value="0"></spin-box><span class="mm" style="width:28px">mm</span>
      <i class="sep" style="margin:0 3px 0 0"></i><i class="chk"></i><span class="rot">旋转</span><spin-box value="0.000"></spin-box><span>°</span>
    </div>
    <div class="badge">63</div>`;
  }
}
customElements.define('offset-float', OffsetFloat);

class ImeBar extends HTMLElement {
  constructor() {
    super();
    this.attachShadow({ mode: 'open' });
    const c = '#2b7fcf';
    this.shadowRoot.innerHTML = `<style>
      :host{position:absolute;left:312px;top:40px;display:flex;align-items:center;height:28px}
      .s{width:25px;height:26px;background:#ec5a1e;border-radius:4px;transform:rotate(-12deg);color:#fff;font:700 24px/25px "Liberation Sans",sans-serif;text-align:center;flex:none;position:relative;z-index:1}
      .bar{display:flex;align-items:center;gap:7px;height:22px;width:181px;padding-left:9px;box-sizing:border-box;background:rgba(255,255,255,.93);box-shadow:0 0 2px rgba(0,0,0,.3);margin-left:-1px}
      .zh{color:${c};font:700 15px "Noto Sans CJK SC",sans-serif;width:15px;flex:none;margin-right:2px}
      svg{flex:none}
    </style>
    <div class="s">S</div>
    <div class="bar">
      <span class="zh">中</span>
      <svg width="14" height="15" viewBox="0 0 14 15"><path d="M9 1a7 7 0 1 1-8 10c5 1 9-4 8-10z" fill="${c}"/></svg>
      <svg width="14" height="15" viewBox="0 0 14 15"><circle cx="3" cy="4" r="1.800" fill="${c}"/><path d="M10 6c2 0 3 2 2 4s-3 3-4 3c2-1 2-2 2-3-2 0-2-4 0-4z" fill="${c}"/></svg>
      <svg width="14" height="18" viewBox="0 0 14 18"><rect x="4" y="1" width="6" height="11" rx="3" fill="${c}"/><path d="M2 8c0 7 10 7 10 0M7 13v3M4 16.500h6" fill="none" stroke="${c}" stroke-width="1.400"/></svg>
      <svg width="16" height="13" viewBox="0 0 16 13"><rect width="16" height="13" rx="2" fill="${c}"/><path d="M2 3h12M2 6h12" stroke="#fff" stroke-dasharray="1.500 1" stroke-width="1.500"/><path d="M4 10h8" stroke="#fff" stroke-width="1.500"/></svg>
      <svg width="15" height="17" viewBox="0 0 15 17"><circle cx="6" cy="4" r="3.500" fill="#b9c2cc"/><path d="M0 16c0-7 12-7 12 0z" fill="#b9c2cc"/><rect x="8" y="9" width="7" height="7" fill="#8d99a6"/></svg>
      <svg width="15" height="15" viewBox="0 0 15 15"><path d="M4 0l3.500 2L11 0l4 4-2.500 2.500V15h-10V6.500L0 4z" fill="${c}"/></svg>
      <svg width="17" height="17" viewBox="0 0 17 17"><path d="M16 4l-3 3-3-1-1-3 3-3c-4-1-6 2-5 5L1 12c-1 1-1 3 0 4s3 1 4 0l6-6c3 1 6-2 5-6z" fill="${c}"/></svg>
    </div>`;
  }
}
customElements.define('ime-bar', ImeBar);
</script>
</body>
</html>
